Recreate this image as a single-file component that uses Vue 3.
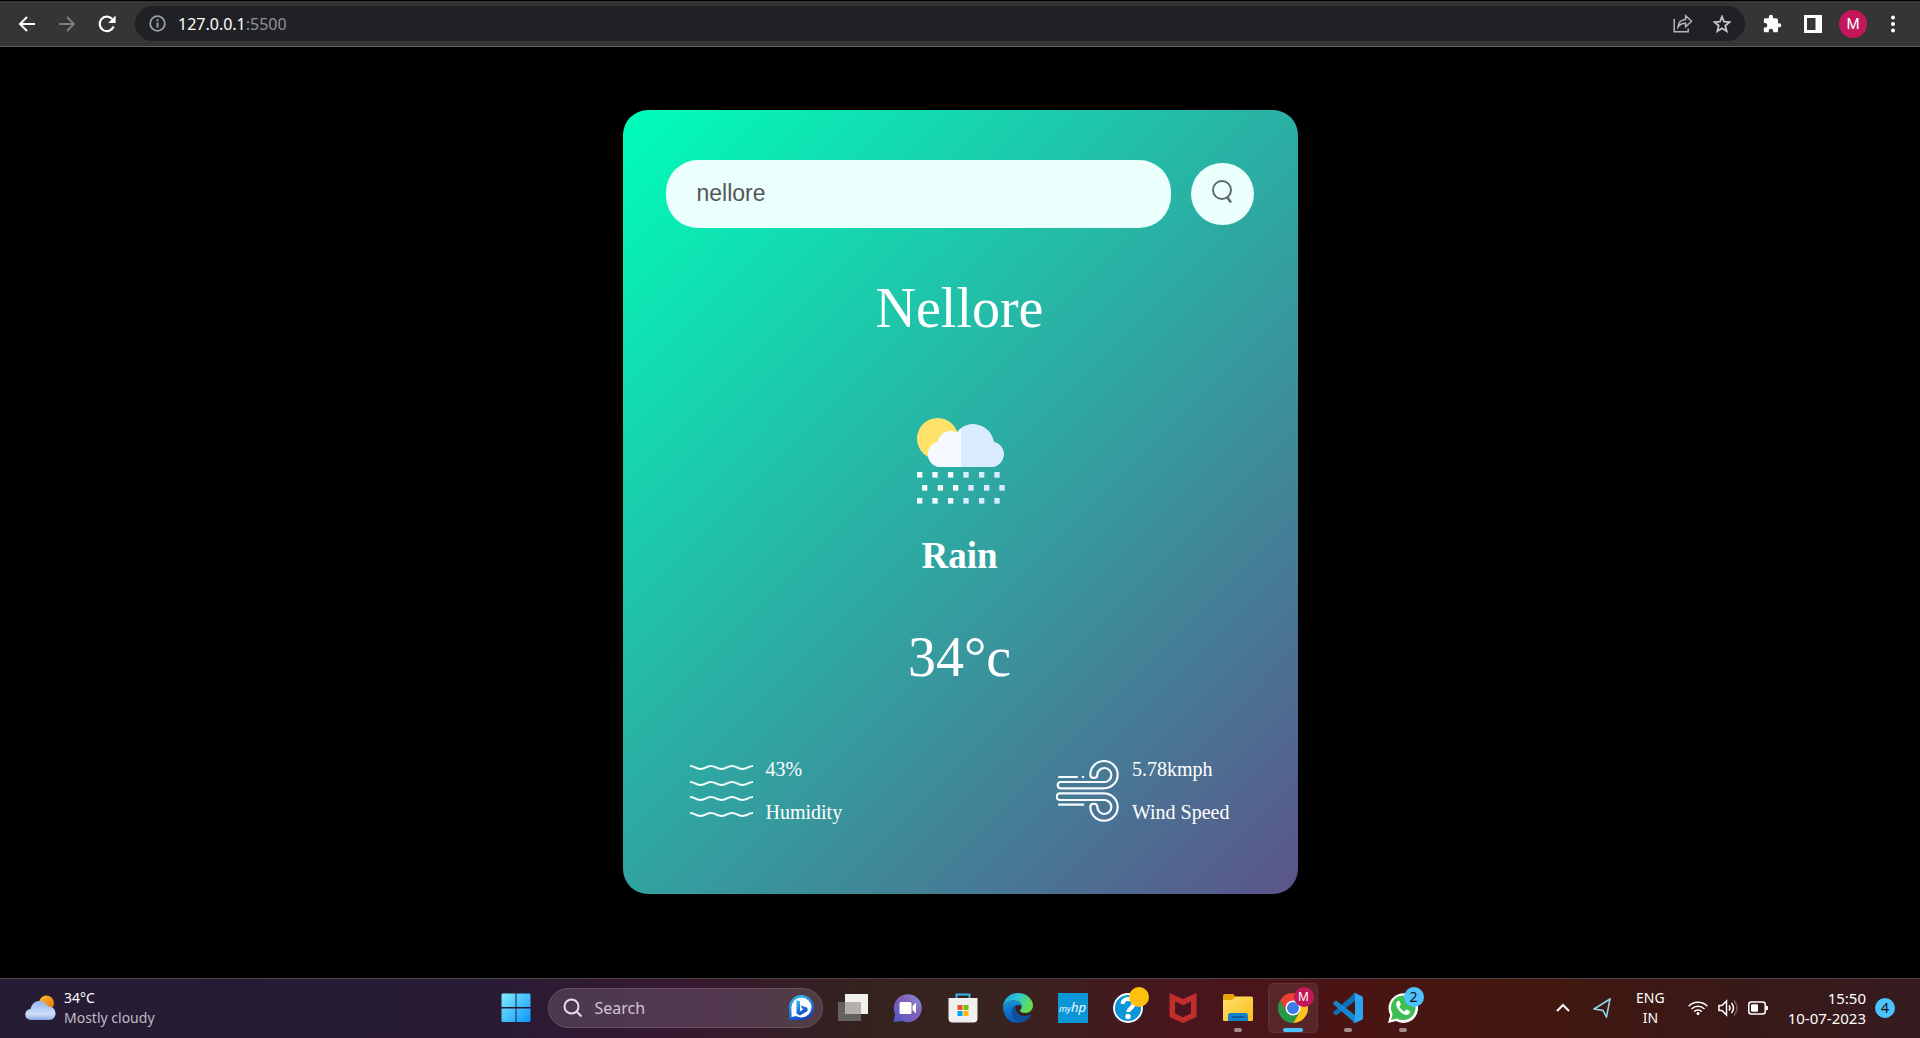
<script setup>
import { ref } from 'vue'

const city = ref('nellore')
const dropRows = [
  { y: 216, xs: [111, 157, 204, 250, 297, 343] },
  { y: 255, xs: [126, 173, 219, 265, 312, 358] },
  { y: 294, xs: [111, 157, 204, 250, 297, 343] },
]
const waveY = [2, 18, 33, 49]
</script>

<template>
  <div class="screen">
    <header class="browser-bar">
      <button class="nav-btn" aria-label="Back">
        <svg width="18" height="18" viewBox="0 0 18 18" fill="none" stroke="#fff" stroke-width="2"><path d="M17 9H2M9 2L2 9l7 7" /></svg>
      </button>
      <button class="nav-btn" aria-label="Forward">
        <svg width="18" height="18" viewBox="0 0 18 18" fill="none" stroke="#7d7d7d" stroke-width="2"><path d="M1 9h15M9 2l7 7-7 7" /></svg>
      </button>
      <button class="nav-btn" aria-label="Reload">
        <svg width="18" height="18" viewBox="0 0 18 18"><path d="M15.6 11.5A7.2 7.2 0 1 1 14.2 4" fill="none" stroke="#fff" stroke-width="2.2" /><path d="M17.6 0.6V8h-7.4z" fill="#fff" /></svg>
      </button>
      <div class="omnibox">
        <svg width="17" height="17" viewBox="0 0 17 17"><circle cx="8.500" cy="8.500" r="7.300" fill="none" stroke="#9aa0a6" stroke-width="1.800" /><path d="M7.500 7.600h2v5h-2zM7.500 4.300h2v2h-2z" fill="#9aa0a6" /></svg>
        <span class="address">127.0.0.1<span class="port">:5500</span></span>
        <svg class="share" width="20" height="19" viewBox="0 0 20 19" fill="none" stroke="#b4b6b8" stroke-width="1.500"><path d="M1.200 5v12.800h14V14.500" /><path d="M5 13c.4-5 3.500-7.300 7.600-7.500V1.800l6 5.500-6 5.500V9.200C9.500 9.200 7 10 5 13z" /></svg>
        <svg width="18" height="18" viewBox="0 0 18 18" fill="none" stroke="#c4c6c8" stroke-width="1.800"><path d="M9 1.500l2 5.200 5.600.4-4.300 3.600 1.400 5.500L9 13.200l-4.700 3 1.400-5.500-4.300-3.600L7 6.700z" /></svg>
      </div>
      <button class="nav-btn" aria-label="Extensions">
        <svg width="20" height="20" viewBox="1 0 24 24" fill="#fff"><path d="M20.500 11H19V7c0-1.100-.9-2-2-2h-4V3.500a2.500 2.500 0 0 0-5 0V5H4c-1.100 0-2 .9-2 2v3.800h1.500a2.700 2.700 0 0 1 0 5.400H2V20c0 1.100.9 2 2 2h3.800v-1.500a2.700 2.700 0 0 1 5.400 0V22H17c1.100 0 2-.9 2-2v-4h1.500a2.500 2.500 0 0 0 0-5z" /></svg>
      </button>
      <button class="nav-btn" aria-label="Side panel">
        <svg width="18" height="18" viewBox="0 0 18 18"><path d="M0 0h18v18H0zM3 3v12h8.500V3z" fill="#fff" fill-rule="evenodd" /></svg>
      </button>
      <button class="avatar" aria-label="Profile">M</button>
      <button class="nav-btn" aria-label="Menu">
        <svg width="4" height="18" viewBox="0 0 4 18" fill="#fff"><circle cx="2" cy="2.500" r="2" /><circle cx="2" cy="9" r="2" /><circle cx="2" cy="15.500" r="2" /></svg>
      </button>
    </header>

    <main class="page">
      <section class="card">
        <form class="search" @submit.prevent>
          <input v-model="city" type="text" aria-label="City name" spellcheck="false" />
          <button type="submit" aria-label="Search">
            <svg width="24" height="30" viewBox="0 0 24 30" fill="none" stroke="#5f6b6b" stroke-width="2"><circle cx="12" cy="11" r="9" /><path d="M16.500 17.500l4.500 6" stroke-width="2.500" /></svg>
          </button>
        </form>
        <h1 class="city">Nellore</h1>
        <svg class="weather-icon" width="90" height="86" viewBox="105 54 270 258">
          <defs><clipPath id="cloudRight"><path d="M243 54h140v150H243z" /></clipPath></defs>
          <circle cx="173" cy="116" r="62" fill="#ffe26a" />
          <g fill="#f4faff">
            <path d="M181 201a38.500 38.500 0 0 1-8-76 39 39 0 0 1 57-27 62 62 0 0 1 111 27 38.500 38.500 0 0 1-5 76z" />
          </g>
          <g fill="#d9ecff" clip-path="url(#cloudRight)">
            <path d="M181 201a38.500 38.500 0 0 1-8-76 39 39 0 0 1 57-27 62 62 0 0 1 111 27 38.500 38.500 0 0 1-5 76z" />
          </g>
          <template v-for="row in dropRows" :key="row.y">
            <rect v-for="x in row.xs" :key="x" :x="x" :y="row.y" width="16" height="17" :fill="x < 243 ? '#f4faff' : '#d9ecff'" />
          </template>
        </svg>
        <h2 class="condition">Rain</h2>
        <p class="temp">34°c</p>
        <div class="details">
          <div class="detail">
            <svg width="63" height="62" viewBox="0 0 63 62" fill="none" stroke="#f4fffd" stroke-width="2">
              <path v-for="y in waveY" :key="y" :d="`M0 ${y + 4}c5 0 5 3 10.500 3s5.500-3 10.500-3 5 3 10.500 3 5.500-3 10.500-3 5 3 10.500 3 5.500-3 10.500-3`" />
            </svg>
            <div class="reading"><span>43%</span><span>Humidity</span></div>
          </div>
          <div class="detail">
            <svg width="63" height="62" viewBox="78 60 189 186" fill="none" stroke="#f7fbff" stroke-width="6.500" stroke-linecap="round">
              <path d="M87 111h54M158 111h2M87 194h73" />
              <path d="M222 126H90a10 10 0 0 0 0 19H222a41 41 0 1 0-41-41c0 13 21 13 21 0a21 21 0 1 1 20 22" />
              <path d="M222 180H90a10 10 0 0 1 0-20H222a41 41 0 1 1-41 41c0-13 21-13 21 0a21 21 0 1 0 20-21" />
            </svg>
            <div class="reading"><span>5.78kmph</span><span>Wind Speed</span></div>
          </div>
        </div>
      </section>
    </main>

    <footer class="taskbar">
      <div class="side widgets">
        <svg width="31" height="26" viewBox="0 0 31 26">
          <defs>
            <linearGradient id="sun" x1="0" y1="0" x2="1" y2="1"><stop stop-color="#f9c22e" /><stop offset="1" stop-color="#ee6a10" /></linearGradient>
            <linearGradient id="cloud" x1="0" y1="0" x2="0" y2="1"><stop stop-color="#93b5f2" /><stop offset=".7" stop-color="#cfdefa" /><stop offset="1" stop-color="#86a8e6" /></linearGradient>
          </defs>
          <circle cx="21.500" cy="8" r="7.500" fill="url(#sun)" />
          <path d="M6 25a5.500 5.500 0 0 1-.5-11C7 8.500 10 6 14.500 6c4 0 7 2.500 8.300 5.500 4.500 0 7.700 2.500 7.700 7 0 4-3 6.500-6.500 6.500z" fill="url(#cloud)" />
        </svg>
        <div class="weather-text"><span>34°C</span><span class="muted">Mostly cloudy</span></div>
      </div>

      <nav class="apps" aria-label="Taskbar">
        <button class="app" aria-label="Start">
          <svg width="30" height="30" viewBox="0 0 30 30">
            <defs><linearGradient id="win" x1="0" y1="0" x2="1" y2="1"><stop stop-color="#80f0ff" /><stop offset="1" stop-color="#0a94fa" /></linearGradient></defs>
            <path d="M1.500 .5H14.500V14H.5V1.500zM15.500 .5H28.500l1 1V14h-14zM.5 15.500h14V29h-13l-1-1zM15.500 15.500h14V28l-1 1h-13z" fill="url(#win)" />
          </svg>
        </button>
        <label class="task-search">
          <svg width="20" height="20" viewBox="0 0 20 20" fill="none" stroke="#e6dfe6" stroke-width="2"><circle cx="8.500" cy="8.500" r="7" /><path d="M13.500 13.500l5 5" /></svg>
          <input type="text" placeholder="Search" aria-label="Search" />
          <svg width="26" height="26" viewBox="0 0 26 26">
            <defs><linearGradient id="bing" x1="0" y1="0" x2="0.400" y2="1"><stop stop-color="#35c8f5" /><stop offset="1" stop-color="#1248c8" /></linearGradient></defs>
            <path d="M1 25V13A12.500 12.500 0 1 1 13 25z" fill="url(#bing)" />
            <circle cx="13.500" cy="12.500" r="10" fill="#fff" /><path d="M3.500 12v10l5-1z" fill="#fff" />
            <path d="M8.500 5l3.500 1.200v10l3.500-2-1.800-1-1.200-3 7 2.500v3.300L12 20.500l-3.500-2z" fill="url(#bing)" />
          </svg>
        </label>
        <button class="app" aria-label="Task view">
          <svg width="30" height="28" viewBox="0 0 30 28"><path d="M0 8h23v19H0z" fill="#646260" /><path d="M7 0h23v20H7z" fill="#f2f0ef" /><path d="M7 8h16v12H7z" fill="#b3b0ae" /></svg>
        </button>
        <button class="app" aria-label="Chat">
          <svg width="30" height="30" viewBox="0 0 30 30">
            <defs><linearGradient id="chat" x1="1" y1="0" x2="0" y2="1"><stop stop-color="#7f9be8" /><stop offset=".4" stop-color="#8461b8" /><stop offset="1" stop-color="#5358c8" /></linearGradient></defs>
            <path d="M.5 29l1.700-7.500A14 14 0 1 1 9 28z" fill="url(#chat)" /><rect x="6.500" y="9" width="12" height="12" rx="1.500" fill="#fff" /><path d="M19.500 13l3.500-3.500v11L19.500 17z" fill="#fff" />
          </svg>
        </button>
        <button class="app" aria-label="Store">
          <svg width="30" height="30" viewBox="0 0 30 30"><path d="M8.500 6V1.500h13V6" fill="none" stroke="#33b5f0" stroke-width="2" /><path d="M.5 5h29v20.500a4 4 0 0 1-4 4h-21a4 4 0 0 1-4-4z" fill="#f0f0f0" /><path d="M9.500 12h5v5h-5z" fill="#f05022" /><path d="M15.500 12h5v5h-5z" fill="#7fba00" /><path d="M9.500 18h5v5h-5z" fill="#00a1f1" /><path d="M15.500 18h5v5h-5z" fill="#ffb900" /></svg>
        </button>
        <button class="app" aria-label="Edge">
          <svg width="30" height="30" viewBox="0 0 30 30">
            <defs>
              <linearGradient id="edgeTop" x1="0" y1="0" x2="1" y2=".4"><stop stop-color="#1fa0dd" /><stop offset=".5" stop-color="#2cc6d2" /><stop offset="1" stop-color="#65dd50" /></linearGradient>
              <linearGradient id="edgeLeft" x1="0" y1="0" x2="0" y2="1"><stop stop-color="#1692da" /><stop offset="1" stop-color="#0a55b8" /></linearGradient>
            </defs>
            <path d="M0 14C.6 6 6.500 0 15 0c9 0 15 6.500 15 12.500 0 4.500-3.500 7.500-7.500 7.500-3.500 0-5.500-1-5.500-2.200 0-1 1.600-1.600 1.600-4.300C18.600 10 15 7.500 10.500 7.500 5 7.500 1.500 10.500 0 14z" fill="url(#edgeTop)" />
            <path d="M0 14C1.500 10 5 7.500 10.500 7.500c4.500 0 8 2.500 8.100 5.500-4-3-9.600.5-9.600 6 0 5.500 4 9.800 9.500 10.500C8 32 0 24.500 0 14z" fill="url(#edgeLeft)" />
            <path d="M12.500 12.500C8.500 15 8 19 9.500 22.500c2 4.500 5.500 7 9.500 7 4-1 7-3.500 9-7 .3-.8-.3-1-.8-.7-5.700 2.700-15.700 1-14.700-9.300z" fill="#10509b" />
          </svg>
        </button>
        <button class="app" aria-label="myHP"><span class="hp">my<b>hp</b></span></button>
        <button class="app" aria-label="Help">
          <svg width="30" height="30" viewBox="0 0 30 30"><circle cx="15" cy="15" r="14" fill="#0b96d8" stroke="#fff" stroke-width="1.800" /><path d="M9.500 11c.4-3.500 2.600-5 5.700-5 3.300 0 5.500 1.800 5.500 4.600 0 4.400-5.500 4.600-5.500 8.400" fill="none" stroke="#fff" stroke-width="4" /><circle cx="15" cy="23.500" r="2.700" fill="#fff" /></svg>
          <i class="badge yellow"></i>
        </button>
        <button class="app" aria-label="McAfee">
          <svg width="28" height="30" viewBox="0 0 28 30"><path d="M.5 0L14 6 27.500 0v24L14 30 .5 24zM6 8.500v12l8 3.800 8-3.800v-12l-8 3.700z" fill="#c22e2c" fill-rule="evenodd" /></svg>
        </button>
        <button class="app" aria-label="File Explorer">
          <svg width="30" height="28" viewBox="0 0 30 28">
            <defs><linearGradient id="folder" x1="0" y1="0" x2="1" y2="1"><stop stop-color="#ffe06c" /><stop offset="1" stop-color="#fbbd1a" /></linearGradient></defs>
            <path d="M0 1.500Q0 0 1.500 0H10l3 3v5H0z" fill="#e5a50a" /><path d="M0 6h9l4-3.500h15.500Q30 2.500 30 4v22q0 1-1 1H1q-1 0-1-1z" fill="url(#folder)" /><path d="M5 27v-5.500q0-2.500 2.500-2.500h15q2.500 0 2.500 2.500V27z" fill="#1580cc" /><path d="M8.500 23h13" stroke="#0b4f92" stroke-width="1.500" />
          </svg>
          <i class="running"></i>
        </button>
        <button class="app active" aria-label="Chrome">
          <svg width="30" height="30" viewBox="0 0 30 30"><path d="M2 7.500A15 15 0 0 1 28 7.500H15L8.500 18.700z" fill="#e94335" /><path d="M28 7.500A15 15 0 0 1 15 30l6.500-11.200L15 7.500z" fill="#fcc31e" /><path d="M2 7.500A15 15 0 0 0 15 30l6.500-11.200h-13z" fill="#249a45" /><circle cx="15" cy="15" r="7.500" fill="#fff" /><circle cx="15" cy="15" r="6" fill="#3b7ded" /></svg>
          <i class="badge pink">M</i>
          <i class="running current"></i>
        </button>
        <button class="app" aria-label="Visual Studio Code">
          <svg width="30" height="30" viewBox="0 0 30 30"><path d="M22 0v8L3 22.500 .5 20.500q-.8-.9 0-1.800z" fill="#0b70b8" /><path d="M22 30v-8L3 7.500.5 9.500q-.8.900 0 1.800z" fill="#1587d0" /><path d="M22 0l7 3.200q1 .5 1 1.600v20.400q0 1.100-1 1.600L22 30q-1.500 0-2-.5 2 .3 2-2V2.500q0-2.300-2-2 .5-.5 2-.5z" fill="#2aa6f2" /></svg>
          <i class="running"></i>
        </button>
        <button class="app" aria-label="WhatsApp">
          <svg width="30" height="30" viewBox="0 0 30 30"><path d="M0 30l2.200-8A14.800 14.800 0 1 1 8 28z" fill="#fff" /><path d="M3 27l1.600-6A12.300 12.300 0 1 1 9 25.400z" fill="#3fbe53" /><path d="M10.500 7.500c-3 1.500-3 5-.3 8.700 3.200 4.400 7.300 6.700 10 5.300 1.600-.8 2.200-2.200 1.800-3.300l-3.500-1.900-2.100 2.100c-2.500-1-4-2.700-5-4.800l1.500-2-1.500-3.800z" fill="#fff" /></svg>
          <i class="badge blue">2</i>
          <i class="running"></i>
        </button>
      </nav>

      <div class="side tray">
        <button class="tray-btn" aria-label="Show hidden icons"><svg width="14" height="9" viewBox="0 0 14 9" fill="none" stroke="#fff" stroke-width="2"><path d="M1 8l6-6 6 6" /></svg></button>
        <svg class="locate" width="18" height="20" viewBox="0 0 18 20" fill="none" stroke="#8fdcf2" stroke-width="1.500"><path d="M17 1L1 11l9 1.500 3.500 6.500z" /></svg>
        <div class="lang"><span>ENG</span><span>IN</span></div>
        <div class="status">
          <svg width="20" height="16" viewBox="0 0 20 16" fill="none" stroke="#fff" stroke-width="1.500"><path d="M.7 6.200a13 13 0 0 1 18.600 0M3.500 9a9.200 9.200 0 0 1 13 0M6.200 11.600a5.400 5.400 0 0 1 7.600 0" /><circle cx="10" cy="13.500" r="1.500" fill="#fff" stroke="none" /></svg>
          <svg width="20" height="18" viewBox="0 0 20 18" fill="none" stroke="#fff" stroke-width="1.500"><path d="M1 6.500h3L8.500 2v14L4 11.500H1zM11 6.500q2 2.500 0 5M13.500 4q4 5 0 10" /><path d="M16 1.500q6 7.500 0 15" stroke="#7a5a5a" /></svg>
          <svg width="20" height="14" viewBox="0 0 20 14"><rect x=".8" y="1" width="16.400" height="12" rx="2.500" fill="none" stroke="#fff" stroke-width="1.500" /><rect x="3" y="3.300" width="7" height="7.400" rx="1" fill="#fff" /><path d="M18 4.500l2 1v3l-2 1z" fill="#fff" /></svg>
        </div>
        <div class="clock"><time>15:50</time><time>10-07-2023</time></div>
        <span class="count">4</span>
      </div>
    </footer>
  </div>
</template>

<style>
body {
  background: #000;
}
</style>

<style scoped>
.screen {
  min-height: 100vh;
  display: flex;
  flex-direction: column;
  background: #000;
  font-family: 'Noto Sans', sans-serif;
  color: #fff;
}
button {
  border: 0;
  padding: 0;
  background: none;
  color: inherit;
  font: inherit;
}
svg {
  display: block;
  flex: none;
}
.browser-bar {
  box-sizing: border-box;
  height: 47px;
  display: flex;
  align-items: center;
  padding: 0 7px;
  background: #353535;
  border-top: 1px solid #000;
  border-bottom: 1px solid #606060;
}
.nav-btn {
  width: 40px;
  height: 40px;
  display: flex;
  align-items: center;
  justify-content: center;
}
.omnibox {
  box-sizing: border-box;
  flex: 1;
  height: 35px;
  margin: 0 8px;
  padding: 0 14px;
  display: flex;
  align-items: center;
  border-radius: 18px;
  background: #202124;
}
.address {
  flex: 1;
  margin-left: 12px;
  font-size: 16px;
}
.port {
  color: #8f9195;
}
.share {
  margin-right: 20px;
}
.avatar {
  width: 28px;
  height: 28px;
  margin: 0 6px;
  border-radius: 50%;
  background: #c2185b;
  font: 15px Roboto, sans-serif;
}
.page {
  flex: 1;
  padding: 63px 0 84px;
}
.card {
  box-sizing: border-box;
  max-width: 675px;
  margin: 0 auto;
  padding: 50px 44px 70px 43px;
  border-radius: 25px;
  background: linear-gradient(135deg, #00feba, #5b548a);
  font-family: 'Liberation Serif', serif;
  display: flex;
  flex-direction: column;
  align-items: center;
}
.search {
  width: 100%;
  display: flex;
  align-items: center;
  gap: 20px;
}
.search input {
  box-sizing: border-box;
  flex: 1;
  min-width: 0;
  height: 68px;
  padding: 0 31px 2px;
  border: 0;
  outline: 0;
  border-radius: 32px;
  background: #ebfffc;
  color: #555;
  font: 23px 'Liberation Sans', sans-serif;
}
.search button {
  width: 63px;
  height: 62px;
  display: flex;
  align-items: center;
  justify-content: center;
  border-radius: 50%;
  background: #ebfffc;
}
.city,
.temp {
  margin: 48px 0 0;
  font-size: 56px;
  line-height: 64px;
  font-weight: 400;
}
.weather-icon {
  margin-top: 78px;
}
.condition {
  margin: 31px 0 0;
  font-size: 37px;
  line-height: 42px;
}
.details {
  align-self: stretch;
  margin-top: 69px;
  padding: 0 24px;
  display: flex;
  justify-content: space-between;
}
.detail {
  display: flex;
  align-items: center;
  gap: 13px;
}
.reading {
  display: flex;
  flex-direction: column;
  gap: 20px;
  font-size: 20px;
  line-height: 23px;
}
.taskbar {
  box-sizing: border-box;
  height: 60px;
  padding-bottom: 2px;
  display: flex;
  align-items: center;
  border-top: 1px solid #4c4246;
  background: linear-gradient(90deg, #261c33 0%, #271b36 24%, #37192f 36%, #35221f 45%, #38231f 52%, #47161f 61%, #4b1414 69%, #43170f 79%, #391917 90%, #351b20 100%);
}
.side {
  flex: 1;
  min-width: 0;
  display: flex;
  align-items: center;
}
.widgets {
  gap: 8px;
  padding-left: 25px;
}
.weather-text,
.clock,
.lang {
  display: flex;
  flex-direction: column;
  font-size: 14px;
  line-height: 20px;
  white-space: nowrap;
}
.muted {
  color: #c0bbc4;
}
.apps {
  display: flex;
  align-items: center;
  gap: 5px;
  margin-right: 2px;
}
.app {
  position: relative;
  width: 50px;
  height: 50px;
  display: flex;
  align-items: center;
  justify-content: center;
  border-radius: 5px;
}
.active {
  background: rgba(255, 255, 255, 0.08);
  box-shadow: inset 0 0 0 1px rgba(255, 255, 255, 0.06);
}
.task-search {
  box-sizing: border-box;
  width: 275px;
  height: 40px;
  margin-left: 2px;
  padding: 0 8px 0 14px;
  display: flex;
  align-items: center;
  border: 1px solid #695061;
  border-radius: 20px;
  background: linear-gradient(90deg, #4a384f, #533850 60%, #513d44);
}
.task-search input {
  flex: 1;
  min-width: 0;
  padding: 0 12px;
  border: 0;
  outline: 0;
  background: none;
  font: 16px 'Noto Sans', sans-serif;
}
.task-search input::placeholder {
  color: #cfc5cf;
}
.hp {
  width: 30px;
  height: 30px;
  background: #0b96d8;
  font: italic 9px/29px 'Open Sans', sans-serif;
  text-align: center;
}
.hp b {
  font-size: 13px;
  font-weight: 500;
}
.badge {
  position: absolute;
  top: 4px;
  right: 4px;
  width: 20px;
  height: 20px;
  border-radius: 50%;
  font-style: normal;
  font-size: 14px;
  line-height: 20px;
}
.yellow {
  background: #ffc10e;
}
.pink {
  background: #c2185b;
  font-size: 12px;
}
.blue {
  background: #4cc2ff;
  color: #111;
}
.running {
  position: absolute;
  bottom: 1px;
  left: 21px;
  width: 8px;
  height: 4px;
  border-radius: 2px;
  background: #a58d8e;
}
.current {
  left: 15px;
  width: 20px;
  background: #4cc2ff;
}
.tray {
  justify-content: flex-end;
  padding-right: 25px;
}
.locate {
  margin: 0 25px 0 23px;
}
.lang {
  align-items: center;
}
.status {
  display: flex;
  align-items: center;
  gap: 10px;
  margin: 0 20px 0 23px;
}
.clock {
  align-items: flex-end;
  font-size: 15px;
}
.count {
  width: 20px;
  height: 20px;
  margin-left: 9px;
  border-radius: 50%;
  background: #4cc2ff;
  color: #111;
  font-size: 14px;
  line-height: 20px;
  text-align: center;
}
</style>
